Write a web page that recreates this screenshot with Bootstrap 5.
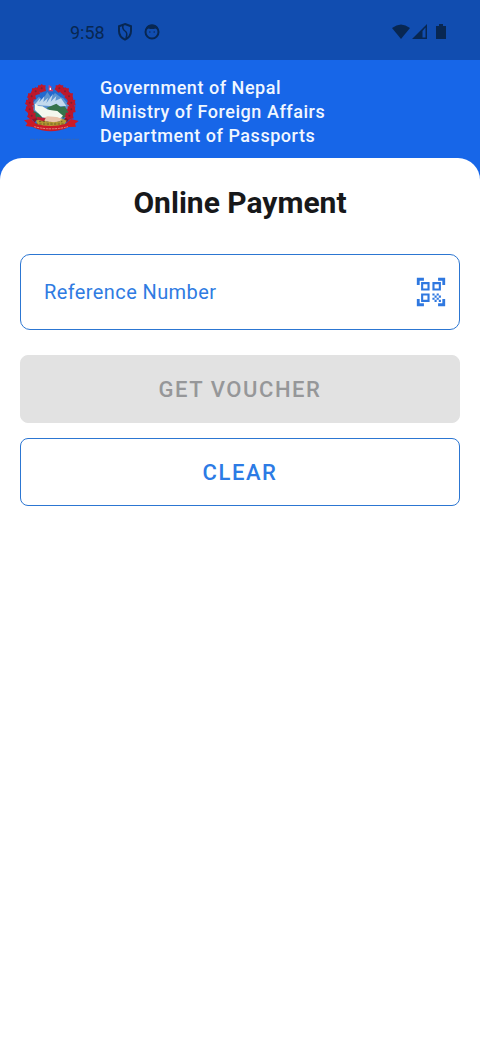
<!DOCTYPE html>
<html lang="en">
<head>
<meta charset="utf-8">
<meta name="viewport" content="width=device-width, initial-scale=1">
<title>Online Payment</title>
<link href="https://cdn.jsdelivr.net/npm/bootstrap@5.3.0/dist/css/bootstrap.min.css" rel="stylesheet">
<style>
  body { font-family: Roboto, "Liberation Sans", sans-serif; background: #1766e8; }
  .status-strip { background: #114db0; color: #082752; height: 60px; padding: 4px 32px 0 70px; font-size: 18px; }
  .status-strip svg { display: block; }
  .org-header { padding: 15px 15px 8px; gap: 10px; }
  .org-name { color: #f1f7ff; font-size: 18px; line-height: 24px; font-weight: 500; letter-spacing: .03em; padding-bottom: 1px; }
  .sheet { background: #fff; border-radius: 22px 22px 0 0; padding: 24px 20px; }
  .sheet-title { font-size: 30px; line-height: 42px; font-weight: 700; color: #17181a; margin-bottom: 30px; }
  .ref-group { border: 1px solid #2c76d2; border-radius: 10px; height: 76px; margin-bottom: 25px; padding: 0 11px 0 23px; }
  .ref-group input, .ref-group input:focus { border: 0; box-shadow: none; background: none; color: #2f7be2; font-size: 20px; line-height: 24px; letter-spacing: .02em; padding: 0; }
  .ref-group input::placeholder { color: #2f7be2; opacity: 1; }
  .scan-btn { color: #2f78e0; padding: 0; border: 0; }
  .button-stack { gap: 15px; }
  .action-btn { height: 68px; border-radius: 8px; font-size: 22px; line-height: 28px; font-weight: 500; letter-spacing: .07em; padding: 8px 12px 6px; }
  .voucher-btn, .voucher-btn:disabled { background: #e2e2e2; color: #969799; border-color: #e2e2e2; opacity: 1; }
  .clear-btn { color: #2c7be5; border-color: #2c76d2; background: #fff; }
</style>
</head>
<body class="min-vh-100 d-flex flex-column">
<div class="status-strip d-flex align-items-center">
  <span>9:58</span>
  <svg class="ms-2" width="50" height="20" viewBox="0 0 50 20" fill="none" stroke="currentColor" stroke-width="2" aria-hidden="true">
    <path d="M12 2 18 4.200V9c0 4-2.500 7-6 8.600C8.500 16 6 13 6 9V4.200z"/>
    <path d="M10 3q-1 4 2 6t1 7" stroke-width="1.500"/>
    <circle cx="39" cy="10" r="6.500"/>
    <path d="M32.500 7.500q1-5 6.500-5t6.500 5q-2 0-3-1-3.500 1-7 0-1 1-3 1z" fill="currentColor" stroke="none"/>
    <path d="M36 10h1.500m3 0H42" stroke-width="1"/>
  </svg>
  <svg class="ms-auto" width="56" height="20" viewBox="0 0 56 20" fill="currentColor" aria-hidden="true">
    <path d="M0 6q9-7 18 0l-9 11z"/>
    <path fill-rule="evenodd" d="M20 17 35 2v15zM30.500 9v6.500h3V5.500z"/>
    <path d="M47 2h4v2h3v13H44V4h3z"/>
  </svg>
</div>
<header class="org-header d-flex align-items-center">
  <svg class="flex-shrink-0" width="75" height="75" viewBox="0 0 225 225" role="img" aria-label="Emblem of Nepal">
    <defs>
      <g id="bloom"><path d="M0-13 5-9 12-9 11-1 13 8 4 10-3 13-8 8-14 3-11-3-11-9-4-9z" fill="#bd182c"/><circle r="3" fill="#7c2034"/></g>
      <clipPath id="disc"><circle cx="107" cy="94" r="58"/></clipPath>
    </defs>
    <g clip-path="url(#disc)">
      <path d="M45 30h125v120H45z" fill="#2369cf"/>
      <path d="M45 92 72 65 82 76 97 51 108 67 120 54 136 66 145 70 170 100v30H45z" fill="#5c93d0"/>
      <path d="M58 90 76 69l-3 13 15-18-3 17 14-13-5 17 20-29-7 24 17-17-3 14 17-7 16 23-38 1z" fill="#c4daee"/>
      <path d="M94 99 124 86l13 10 12-2 15 21-18 15z" fill="#37734b"/>
      <path d="M60 86q10 9 22 8l17 10 28 4 17 14-8 8-54-3-22-22z" fill="#f4f8ee"/>
      <path d="M52 106q20 8 30 23l-12 11-21-20z" fill="#28704c"/>
    </g>
    <path d="M81 38Q43 53 44 95q1 26 19 43M132 38q39 15 38 57-1 26-19 43" fill="none" stroke="#8e1728" stroke-width="12"/>
    <g>
      <use href="#bloom" x="80" y="40"/><use href="#bloom" x="62" y="49"/><use href="#bloom" x="50" y="64"/><use href="#bloom" x="44" y="83"/><use href="#bloom" x="44" y="103"/><use href="#bloom" x="50" y="122"/>
      <use href="#bloom" x="133" y="40"/><use href="#bloom" x="150" y="49"/><use href="#bloom" x="162" y="64"/><use href="#bloom" x="169" y="83"/><use href="#bloom" x="169" y="103"/><use href="#bloom" x="163" y="122"/>
    </g>
    <path d="M101 29 112 37 107 38 114 46v3h-13z" fill="#d43b70"/><path d="M104 38h4v7h-4z" fill="#fff"/>
    <path d="M63 137q22-13 44-6 26-8 48 6l-10 18H70z" fill="#b39b32"/>
    <path d="M62 147h90M72 140h70" stroke="#695a2a" stroke-width="3" stroke-dasharray="7 4"/>
    <path d="M78 130 98 124l26 2 18 5-8 8-17 3-24-3z" fill="#e9c3aa"/>
    <path d="M64 125 92 130l-5 9-20-5z" fill="#bd1c32"/>
    <path d="M27 136l21-4 16 15q43 12 87 0l17-15 23 6-11 8 3 9-22 1q-54 26-108 0l-21-3 5-8z" fill="#cb1a27"/>
    <path d="M58 155q51 13 101 0" fill="none" stroke="#e08a82" stroke-width="3" stroke-dasharray="5 2 8 3"/>
    <path d="M45 193h147" stroke="#3768b5" stroke-width="4" stroke-dasharray="15 3 7 2" opacity=".75"/>
  </svg>
  <div class="org-name">Government of Nepal<br>Ministry of Foreign Affairs<br>Department of Passports</div>
</header>
<main class="sheet flex-grow-1">
  <h1 class="sheet-title text-center">Online Payment</h1>
  <form>
    <div class="ref-group d-flex align-items-center">
      <input class="form-control" type="text" id="refNumber" placeholder="Reference Number" aria-label="Reference Number">
      <button class="scan-btn btn flex-shrink-0" type="button" aria-label="Scan QR code">
        <svg class="d-block" width="34" height="34" viewBox="0 0 24 24" fill="currentColor" aria-hidden="true"><path d="M9.500 6.500v3h-3v-3zM11 5H5v6h6zM9.500 14.500v3h-3v-3zM11 13H5v6h6zM17.500 6.500v3h-3v-3zM19 5h-6v6h6zM13 13h1.500v1.500H13zM14.500 14.500H16V16h-1.500zM16 13h1.500v1.500H16zM13 16h1.500v1.500H13zM14.500 17.500H16V19h-1.500zM16 16h1.500v1.500H16zM17.500 14.500H19V16h-1.500zM17.500 17.500H19V19h-1.500zM22 7h-2V4h-3V2h5zM22 22v-5h-2v3h-3v2zM2 22h5v-2H4v-3H2zM2 2v5h2V4h3V2z" fill-rule="evenodd"/></svg>
      </button>
    </div>
    <div class="button-stack d-grid">
      <button class="btn action-btn voucher-btn" type="submit" disabled>GET VOUCHER</button>
      <button class="btn action-btn clear-btn" type="reset">CLEAR</button>
    </div>
  </form>
</main>
<script src="https://cdn.jsdelivr.net/npm/bootstrap@5.3.0/dist/js/bootstrap.bundle.min.js"></script>
</body>
</html>
